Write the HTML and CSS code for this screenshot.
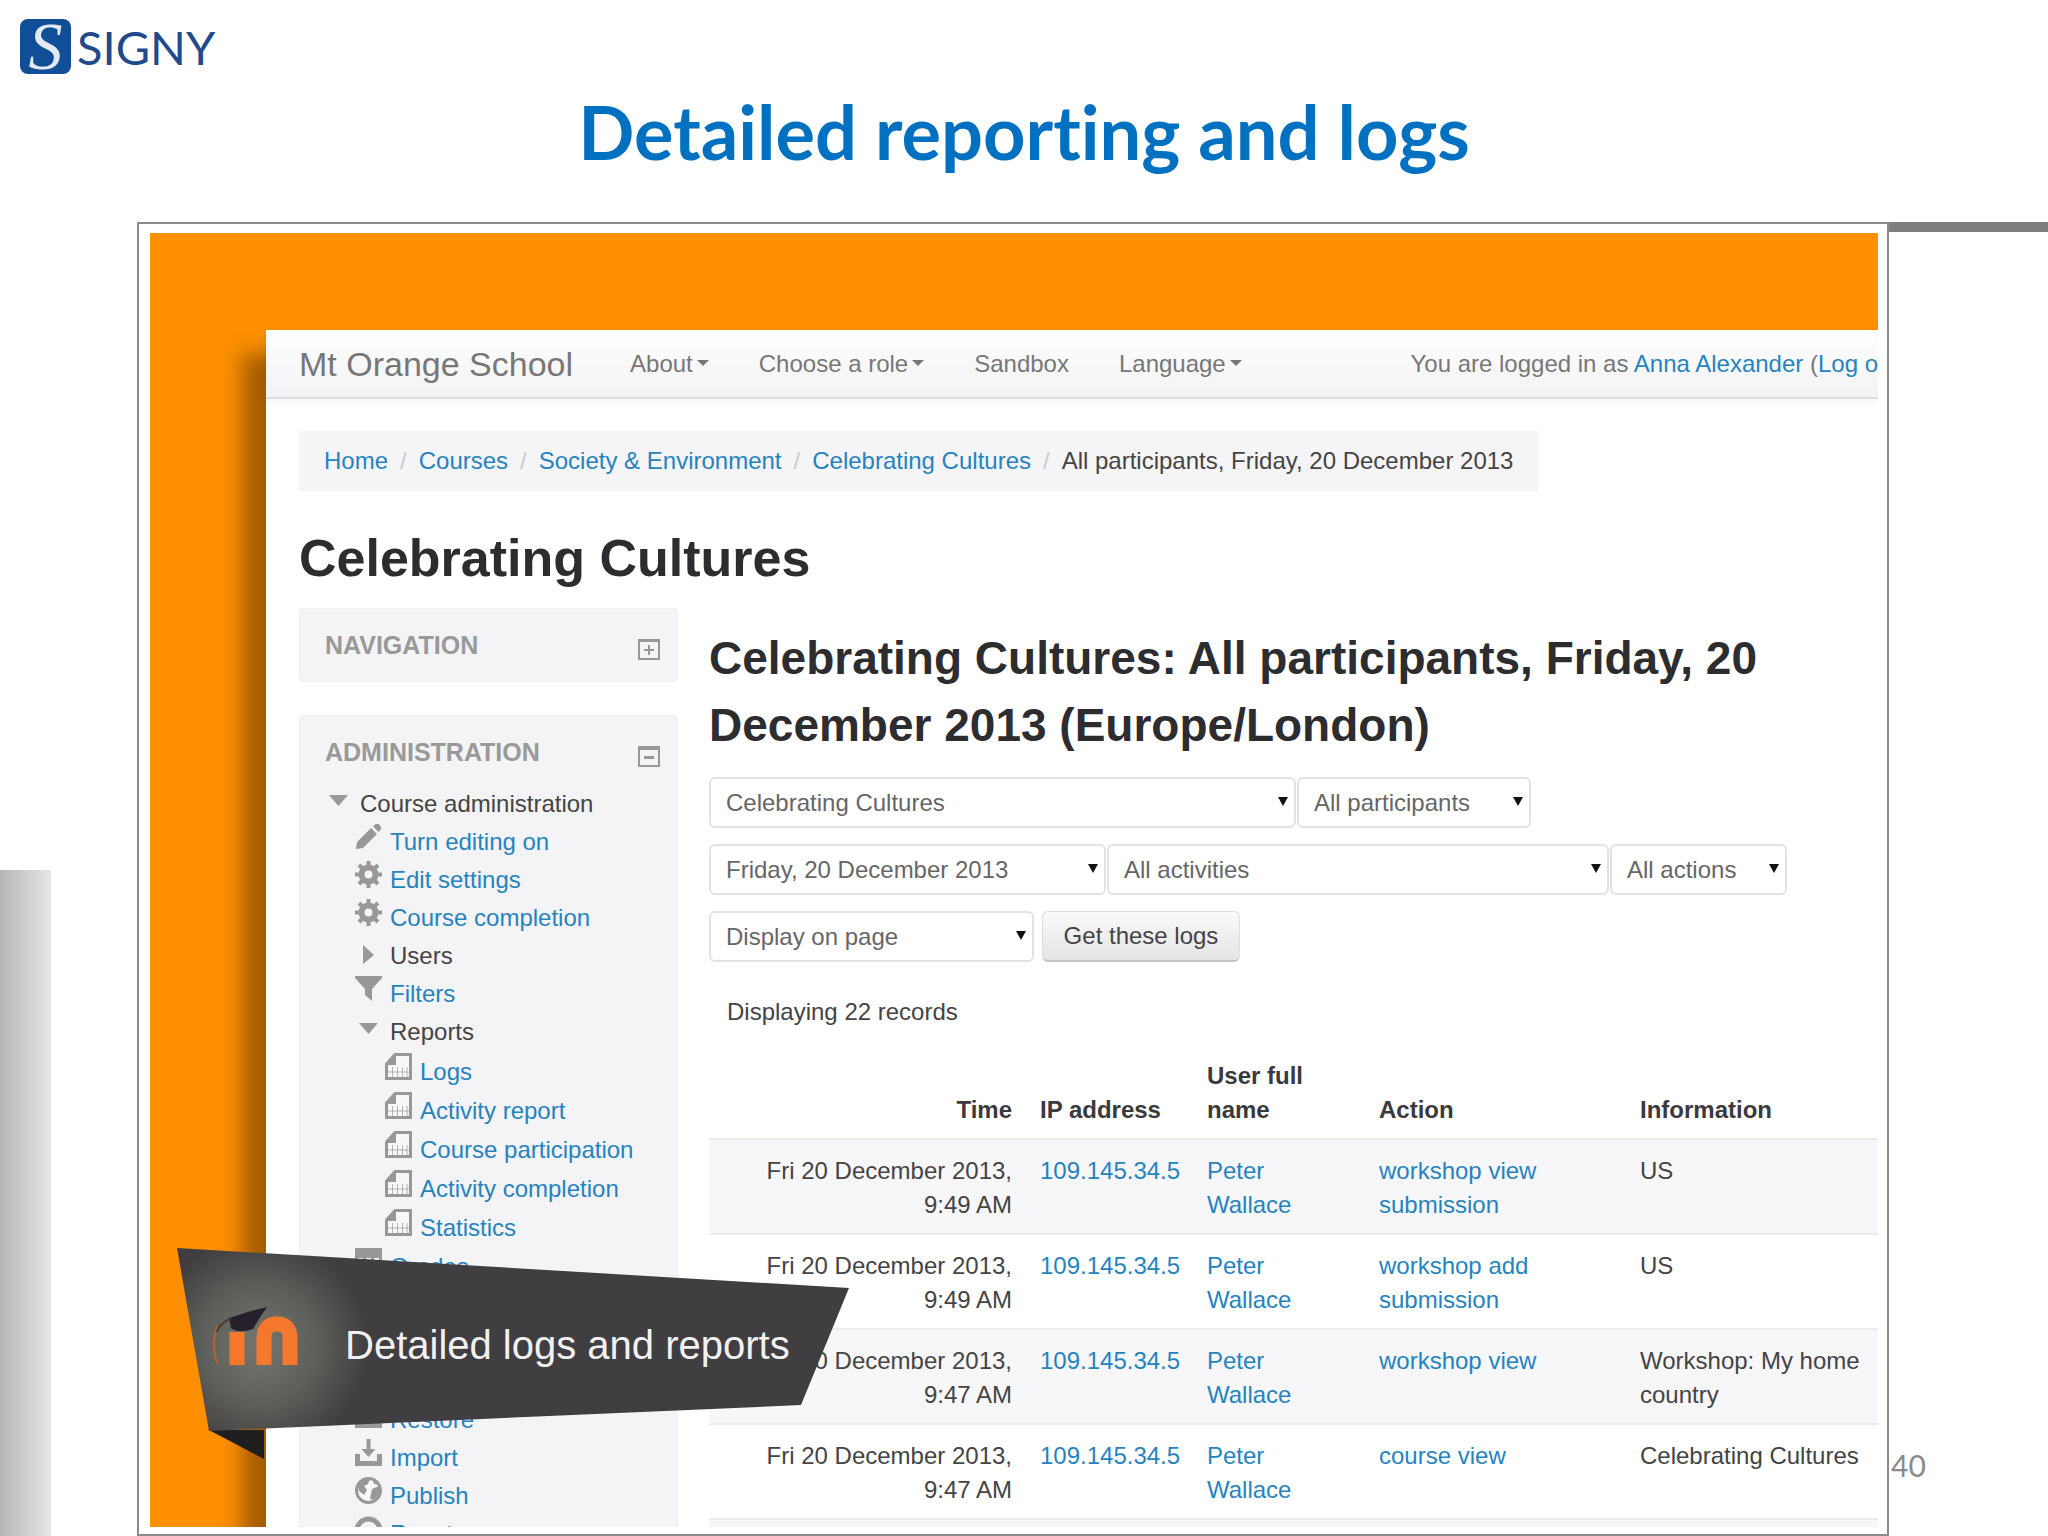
FILE: index.html
```
<!DOCTYPE html>
<html lang="en">
<head>
  <meta charset="UTF-8">
  <meta name="viewport" content="width=device-width, initial-scale=1.0">
  <title>Detailed reporting and logs</title>
  <link rel="stylesheet" href="styles.css">
</head>
<body>
  <!-- icon set for the course tree -->
  <svg class="sprite" aria-hidden="true">
    <symbol id="i-pencil" viewBox="0 0 27 27"><path d="M1 26l1-7L16 5l6 6L8 25zM18 3.500l2-2q2-1.500 4 0l1.500 1.500q1.500 2 0 4l-2 2z"/></symbol>
    <symbol id="i-gear" viewBox="0 0 27 27">
      <circle cx="13.500" cy="13.500" r="7" fill="none" stroke="currentColor" stroke-width="6"/>
      <path d="M13.500 0v6M13.500 21v6M0 13.500h6M21 13.500h6M4 4l4 4M19 19l4 4M4 23l4-4M19 8l4-4" fill="none" stroke="currentColor" stroke-width="4"/>
    </symbol>
    <symbol id="i-filter" viewBox="0 0 27 27"><path d="M0 1h27v2L17 14v12l-7-6v-6L0 3z"/></symbol>
    <symbol id="i-report" viewBox="0 0 27 27">
      <path d="M10 1.500h15.500v24h-24V11z" fill="#f8f8f9" stroke="currentColor" stroke-width="3"/>
      <path d="M11 1v11H1z"/>
      <path d="M7.500 14v10M12.500 14v10M17.500 14v10M22 14v10M3 19h21" fill="none" stroke="currentColor" stroke-width="1" opacity="0.700"/>
    </symbol>
    <symbol id="i-grid" viewBox="0 0 27 27">
      <path d="M0 0h27v10H0z"/>
      <path d="M1.500 9v16.500h24V9M9.500 9v16M17.500 9v16M1 17h25" fill="none" stroke="currentColor" stroke-width="3"/>
    </symbol>
    <symbol id="i-import" viewBox="0 0 27 27">
      <path d="M0 15h5v7h17v-7h5v12H0z"/>
      <path d="M11.500 0h4v10h5l-7 8-7-8h5z"/>
    </symbol>
    <symbol id="i-globe" viewBox="0 0 27 27">
      <circle cx="13.500" cy="13.500" r="12" fill="#f8f8f9" stroke="currentColor" stroke-width="3"/>
      <path d="M3 8q5-7 12-6l-2 5-4 2 3 4-3 5-5-4zM17 12l7-3 1 7-6 7-4-1 1-5zM18 3l6 5-5-1z"/>
    </symbol>
    <symbol id="i-reset" viewBox="0 0 27 27"><path d="M4 22a11.500 11.500 0 1 1 19 0" fill="none" stroke="currentColor" stroke-width="5"/></symbol>
    <symbol id="i-down" viewBox="0 0 27 27"><path d="M4 10h19l-9.500 11z"/></symbol>
    <symbol id="i-right" viewBox="0 0 27 27"><path d="M8 8l11 10L8 27z"/></symbol>
    <symbol id="i-plus" viewBox="0 0 22 22">
      <path d="M1 2h20v19H1z" fill="none" stroke="currentColor" stroke-width="2"/>
      <path d="M0 1h22v3H0zM10 7h2v4h4v2h-4v4h-2v-4H6v-2h4z"/>
    </symbol>
    <symbol id="i-minus" viewBox="0 0 22 22">
      <path d="M1 2h20v19H1z" fill="none" stroke="currentColor" stroke-width="2"/>
      <path d="M0 1h22v4H0zM6 11h10v3H6z"/>
    </symbol>
  </svg>

  <header class="slide-header">
    <div class="logo"><span class="logo-mark">S</span><span class="logo-name">SIGNY</span></div>
    <h1 class="slide-title">Detailed reporting and logs</h1>
  </header>

  <div class="stage">
    <div class="rail"></div>

    <main class="frame">
      <div class="desktop">
        <div class="page">
          <nav class="navbar">
            <a class="brand" href="#">Mt Orange School</a>
            <ul class="menu">
              <li><a class="caret" href="#">About</a></li>
              <li><a class="caret" href="#">Choose a role</a></li>
              <li><a href="#">Sandbox</a></li>
              <li><a class="caret" href="#">Language</a></li>
            </ul>
            <div class="login">You are logged in as <a href="#">Anna Alexander</a> (<a href="#">Log o</a></div>
          </nav>

          <div class="content">
            <ul class="breadcrumb">
              <li><a href="#">Home</a></li>
              <li><a href="#">Courses</a></li>
              <li><a href="#">Society &amp; Environment</a></li>
              <li><a href="#">Celebrating Cultures</a></li>
              <li>All participants, Friday, 20 December 2013</li>
            </ul>

            <h2 class="course-title">Celebrating Cultures</h2>

            <div class="columns">
              <aside class="sidebar">
                <section class="block">
                  <div class="block-header">
                    <h3>NAVIGATION</h3>
                    <button class="toggle" aria-label="Show navigation"><svg><use href="#i-plus"/></svg></button>
                  </div>
                </section>

                <section class="block">
                  <div class="block-header">
                    <h3>ADMINISTRATION</h3>
                    <button class="toggle" aria-label="Hide administration"><svg><use href="#i-minus"/></svg></button>
                  </div>
                  <ul class="tree">
                    <li>
                      <div class="item"><svg><use href="#i-down"/></svg>Course administration</div>
                      <ul>
                        <li class="item"><svg><use href="#i-pencil"/></svg><a href="#">Turn editing on</a></li>
                        <li class="item"><svg><use href="#i-gear"/></svg><a href="#">Edit settings</a></li>
                        <li class="item"><svg><use href="#i-gear"/></svg><a href="#">Course completion</a></li>
                        <li class="item"><svg><use href="#i-right"/></svg>Users</li>
                        <li class="item"><svg><use href="#i-filter"/></svg><a href="#">Filters</a></li>
                        <li>
                          <div class="item"><svg><use href="#i-down"/></svg>Reports</div>
                          <ul class="reports">
                            <li class="item"><svg><use href="#i-report"/></svg><a href="#">Logs</a></li>
                            <li class="item"><svg><use href="#i-report"/></svg><a href="#">Activity report</a></li>
                            <li class="item"><svg><use href="#i-report"/></svg><a href="#">Course participation</a></li>
                            <li class="item"><svg><use href="#i-report"/></svg><a href="#">Activity completion</a></li>
                            <li class="item"><svg><use href="#i-report"/></svg><a href="#">Statistics</a></li>
                          </ul>
                        </li>
                        <li class="item"><svg><use href="#i-grid"/></svg><a href="#">Grades</a></li>
                        <li class="item below-ribbon"><svg><use href="#i-import"/></svg><a href="#">Restore</a></li>
                        <li class="item"><svg><use href="#i-import"/></svg><a href="#">Import</a></li>
                        <li class="item"><svg><use href="#i-globe"/></svg><a href="#">Publish</a></li>
                        <li class="item"><svg><use href="#i-reset"/></svg><a href="#">Reset</a></li>
                      </ul>
                    </li>
                  </ul>
                </section>
              </aside>

              <section class="report">
                <h2>Celebrating Cultures: All participants, Friday, 20 December 2013 (Europe/London)</h2>

                <form class="filters">
                  <div class="filter-row">
                    <span class="select w-course"><select aria-label="Course"><option>Celebrating Cultures</option></select></span>
                    <span class="select w-people"><select aria-label="Participants"><option>All participants</option></select></span>
                  </div>
                  <div class="filter-row">
                    <span class="select w-date"><select aria-label="Date"><option>Friday, 20 December 2013</option></select></span>
                    <span class="select w-activity"><select aria-label="Activities"><option>All activities</option></select></span>
                    <span class="select w-action"><select aria-label="Actions"><option>All actions</option></select></span>
                  </div>
                  <div class="filter-row">
                    <span class="select w-format"><select aria-label="Format"><option>Display on page</option></select></span>
                    <button class="btn" type="button">Get these logs</button>
                  </div>
                </form>

                <p class="count">Displaying 22 records</p>

                <table class="logs">
                  <thead>
                    <tr>
                      <th class="time">Time</th>
                      <th class="ip">IP address</th>
                      <th class="user">User full name</th>
                      <th class="action">Action</th>
                      <th>Information</th>
                    </tr>
                  </thead>
                  <tbody>
                    <tr>
                      <td class="time">Fri 20 December 2013, 9:49 AM</td>
                      <td><a href="#">109.145.34.5</a></td>
                      <td><a href="#">Peter Wallace</a></td>
                      <td><a href="#">workshop view submission</a></td>
                      <td>US</td>
                    </tr>
                    <tr>
                      <td class="time">Fri 20 December 2013, 9:49 AM</td>
                      <td><a href="#">109.145.34.5</a></td>
                      <td><a href="#">Peter Wallace</a></td>
                      <td><a href="#">workshop add submission</a></td>
                      <td>US</td>
                    </tr>
                    <tr>
                      <td class="time">Fri 20 December 2013, 9:47 AM</td>
                      <td><a href="#">109.145.34.5</a></td>
                      <td><a href="#">Peter Wallace</a></td>
                      <td><a href="#">workshop view</a></td>
                      <td>Workshop: My home country</td>
                    </tr>
                    <tr>
                      <td class="time">Fri 20 December 2013, 9:47 AM</td>
                      <td><a href="#">109.145.34.5</a></td>
                      <td><a href="#">Peter Wallace</a></td>
                      <td><a href="#">course view</a></td>
                      <td>Celebrating Cultures</td>
                    </tr>
                    <tr class="spare"><td colspan="5"></td></tr>
                  </tbody>
                </table>
              </section>
            </div>
          </div>
        </div>

        <!-- ribbon over the lower left corner -->
        <div class="ribbon">
          <svg class="ribbon-shape" viewBox="0 0 672 211" aria-hidden="true">
            <defs>
              <radialGradient id="glow" gradientUnits="userSpaceOnUse" cx="82" cy="98" r="110">
                <stop offset="0" stop-color="#74776f"/>
                <stop offset="0.500" stop-color="#5f605b"/>
                <stop offset="1" stop-color="#403e40"/>
              </radialGradient>
            </defs>
            <path d="M32 182h55v29z" fill="#1f1e20"/>
            <path d="M0 0l672 40-48 117L32 183z" fill="url(#glow)"/>
            <path d="M40 78q-6 16 0 38" fill="none" stroke="#b5622c" stroke-width="2"/>
            <path d="M60 117V84" stroke="#f5782c" stroke-width="15"/>
            <path d="M87 117V90q0-14 13-14t13 14v27" fill="none" stroke="#f5782c" stroke-width="15"/>
            <path d="M52 70l22-7 16-4-8 12-6 10q-14 5-22-1z" fill="#25202c"/>
            <path d="M54 70q-12 6-14 14" fill="none" stroke="#4a3a36" stroke-width="2"/>
          </svg>
          <span class="ribbon-text">Detailed logs and reports</span>
        </div>
      </div>
    </main>

    <div class="margin">
      <div class="rule"></div>
      <span class="page-number">40</span>
    </div>
  </div>
</body>
</html>
```
FILE: styles.css
```
* {
  box-sizing: border-box;
}

body {
  margin: 0;
  height: 100vh;
  display: flex;
  flex-direction: column;
  overflow: hidden;
  background: #fff;
  color: #444;
  font-family: "Liberation Sans", Arial, sans-serif;
  font-size: 24px;
  line-height: 34px;
}

ul {
  list-style: none;
  margin: 0;
  padding: 0;
}

a {
  color: #2584bd;
  text-decoration: none;
}

.sprite {
  display: none;
}

/* slide header */
.slide-header {
  flex: none;
  height: 222px;
  padding: 19px 20px 0;
}

.logo {
  display: flex;
  align-items: center;
  gap: 6px;
  height: 55px;
  font-family: Lato, Carlito, sans-serif;
  font-size: 47px;
  color: #1f4a8c;
}

.logo-mark {
  width: 51px;
  height: 55px;
  border-radius: 8px;
  background: #104f98;
  color: #e4eaf3;
  font-family: "Liberation Serif", serif;
  font-size: 68px;
  font-style: italic;
  line-height: 55px;
  text-align: center;
}

.slide-title {
  margin: 16px 0 0;
  font-family: Lato, Carlito, sans-serif;
  font-size: 74px;
  font-weight: bold;
  font-variant-ligatures: none;
  line-height: 84px;
  text-align: center;
  color: #0070c0;
}

.stage {
  flex: 1;
  min-height: 0;
  display: flex;
}

.rail {
  flex: none;
  align-self: flex-end;
  width: 51px;
  height: calc(50vh - 102px);
  margin-right: 86px;
  background: linear-gradient(to right, #b5b5b5, #e6e6e6);
}

.margin {
  flex: none;
  width: 159px;
  display: flex;
  flex-direction: column;
  justify-content: space-between;
}

.rule {
  height: 10px;
  background: #7f7d80;
}

.page-number {
  padding: 0 0 53px 2px;
  font-family: Lato, Carlito, sans-serif;
  font-size: 30px;
  line-height: 36px;
  color: #8b898b;
}

/* framed desktop */
.frame {
  flex: 1;
  min-width: 0;
  padding: 9px 9px 7px 11px;
  border: 2px solid #8b8a8d;
}

.desktop {
  position: relative;
  height: 100%;
  overflow: hidden;
  padding: 97px 0 0 116px;
  background: #fd8f00;
}

.page {
  background: #fff;
  box-shadow: -24px 24px 20px rgba(0, 0, 0, 0.35);
}

.navbar {
  display: flex;
  align-items: center;
  height: 69px;
  padding-left: 33px;
  border-bottom: 2px solid #dcdbdd;
  background: linear-gradient(#fff, #f3f2f4);
  box-shadow: 0 2px 8px rgba(0, 0, 0, 0.06);
  color: #777;
  white-space: nowrap;
}

.brand {
  margin-right: 57px;
  font-size: 34px;
  color: #777;
}

.menu {
  display: flex;
  gap: 50px;
}

.menu a {
  color: #777;
}

.caret::after {
  content: "";
  display: inline-block;
  margin-left: 4px;
  border: 6px solid transparent;
  border-top-color: #777;
  border-bottom: 0;
  vertical-align: 6px;
}

.login {
  margin-left: auto;
}

.content {
  padding: 32px 0 0 33px;
}

.breadcrumb {
  display: flex;
  width: fit-content;
  padding: 13px 25px;
  background: #f5f4f6;
}

.breadcrumb li + li::before {
  content: "/";
  padding: 0 12px;
  color: #ccc;
}

.course-title {
  margin: 37px 0 20px;
  font-size: 52px;
  line-height: 60px;
  color: #2d2d2f;
}

.columns {
  display: flex;
  align-items: flex-start;
  gap: 31px;
}

/* side blocks */
.sidebar {
  flex: none;
  width: 379px;
}

.block {
  margin-bottom: 33px;
  padding: 19px 17px 19px 25px;
  border: 1px solid #efeef0;
  border-radius: 4px;
  background: #f4f3f5;
}

.block-header {
  display: flex;
  justify-content: space-between;
  align-items: flex-end;
}

.block-header h3 {
  margin: 0;
  font-size: 25px;
  color: #999;
}

.toggle {
  display: flex;
  padding: 0 0 2px;
  border: 0;
  background: none;
  color: #99979a;
}

.toggle svg {
  width: 22px;
  height: 22px;
  fill: currentColor;
}

.tree {
  margin-top: 16px;
}

.tree ul {
  padding-left: 30px;
}

.item {
  display: flex;
  gap: 8px;
  height: 38px;
  line-height: 38px;
  white-space: nowrap;
}

.item svg {
  width: 27px;
  height: 27px;
  color: #99979a;
  fill: currentColor;
}

.tree .reports {
  padding-top: 2px;
}

.reports .item {
  height: 39px;
}

/* leaves room for the ribbon */
.below-ribbon {
  margin-top: 115px;
}

/* log report */
.report {
  flex: 1;
  min-width: 0;
}

.report h2 {
  margin: 17px 0 18px;
  padding-right: 60px;
  font-size: 46px;
  line-height: 67px;
  color: #2d2d2f;
}

.filters {
  display: flex;
  flex-direction: column;
  gap: 16px;
}

.filter-row {
  display: flex;
  gap: 1px;
}

.select {
  position: relative;
}

.select::after {
  content: "";
  position: absolute;
  top: 20px;
  right: 8px;
  border: 5px solid transparent;
  border-top: 9px solid #111;
  border-bottom: 0;
  pointer-events: none;
}

select {
  appearance: none;
  width: 100%;
  height: 51px;
  padding: 0 15px;
  border: 2px solid #e2e1e4;
  border-radius: 6px;
  background: #fff;
  color: #666;
  font: inherit;
}

.w-course { width: 587px; }
.w-people { width: 234px; }
.w-date { width: 397px; }
.w-activity { width: 502px; }
.w-action { width: 177px; }
.w-format { width: 325px; }

.btn {
  margin-left: 7px;
  width: 198px;
  height: 51px;
  padding: 0;
  border: 1px solid #dddcde;
  border-bottom: 2px solid #c4c3c6;
  border-radius: 6px;
  background: linear-gradient(#fbfafb, #e4e3e5);
  color: #444;
  font: inherit;
}

.count {
  margin: 33px 18px 16px;
}

.logs {
  width: 100%;
  table-layout: fixed;
  border-collapse: collapse;
}

.logs th,
.logs td {
  padding: 14px 14px 11px;
  text-align: left;
  vertical-align: top;
}

.logs th {
  vertical-align: bottom;
  color: #3a3a3c;
}

.logs td {
  border-top: 2px solid #ebeaec;
}

.logs tbody tr:nth-child(odd) {
  background: #f7f6f8;
}

.logs .time {
  width: 317px;
  text-align: right;
}

.logs .ip { width: 167px; }
.logs .user { width: 172px; }
.logs .action { width: 261px; }

.logs .spare td {
  height: 95px;
}

/* ribbon */
.ribbon {
  position: absolute;
  left: 27px;
  bottom: 68px;
  width: 672px;
  height: 211px;
}

.ribbon-shape {
  display: block;
  width: 100%;
  height: 100%;
}

.ribbon-text {
  position: absolute;
  top: 73px;
  left: 168px;
  font-size: 40px;
  line-height: 48px;
  white-space: nowrap;
  color: #f2f1f2;
}
```
